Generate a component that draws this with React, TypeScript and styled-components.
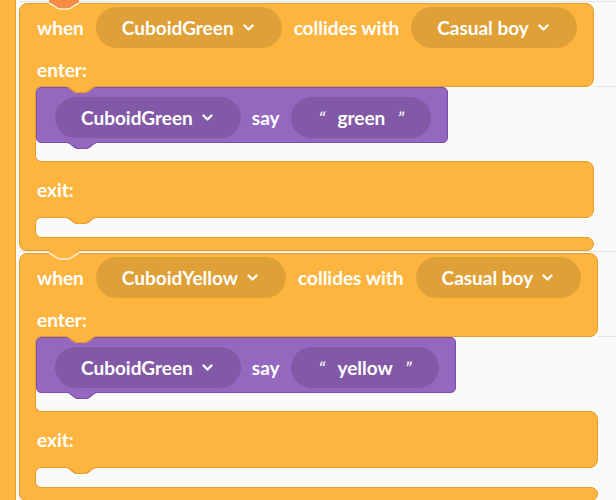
import React from 'react'
import styled, { createGlobalStyle } from 'styled-components'

const orange = '#fdb540'
const orangeEdge = '#e59d2e'
const orangePill = '#e0a038'
const purple = '#9568bf'
const purpleEdge = '#7c4fae'
const purplePill = '#8259a7'
const paper = '#fafafa'

const GlobalStyle = createGlobalStyle`
  html, body {
    margin: 0;
    padding: 0;
    background: ${paper};
    overflow: hidden;
  }
  body {
    font-family: "Lato", "Open Sans", sans-serif;
  }
`

const Workspace = styled.div`
  display: flex;
  gap: 3px;
  height: 500px;
  overflow: hidden;
`

const OuterArm = styled.div`
  width: 15px;
  flex-shrink: 0;
  background: ${orange};
  border-right: 1px solid ${orangeEdge};
`

const Stack = styled.div`
  flex: 1;
  display: flex;
  flex-direction: column;
  align-items: flex-start;
  gap: 2px;
  padding-top: 3px;
`

const Block = styled.div`
  position: relative;
  display: flex;
  flex-direction: column;

  &::before {
    content: '';
    position: absolute;
    left: 0;
    top: -2px;
    width: 100vw;
    height: 1px;
    background: #e6e6e6;
  }
`

const Head = styled.div`
  position: relative;
  background: ${orange};
  border: 1px solid ${orangeEdge};
  border-radius: 8px 8px 8px 0;
  padding: 3px 16px 0 17px;

  &::after {
    content: '';
    position: absolute;
    left: 100%;
    bottom: -1px;
    width: 100vw;
    height: 1px;
    background: #e6e6e6;
  }
`

const Row = styled.div`
  display: flex;
  align-items: center;
  gap: 12px;
`

const Label = styled.span`
  color: #fff;
  font-weight: 700;
  font-size: 19px;
  line-height: 24px;
  white-space: nowrap;
`

const SectionLabel = styled(Label)`
  display: block;
  box-sizing: border-box;
  height: 38px;
  padding-top: 10px;
`

const Pill = styled.div<{ $tone: string }>`
  display: inline-flex;
  align-items: center;
  gap: 9px;
  height: 41px;
  padding: 0 28px 0 26px;
  border-radius: 21px;
  background: ${p => p.$tone};
  color: #fff;
  font-weight: 700;
  font-size: 19px;
  white-space: nowrap;
`

const TextPill = styled(Pill)`
  gap: 12px;
  padding: 0 27px 0 28px;
`

const Quote = styled.span`
  font-weight: 400;
  font-style: italic;
  font-size: 20px;
`

const ChevronIcon = styled.svg`
  fill: none;
  stroke: #fff;
  stroke-width: 2.4;
  stroke-linecap: round;
  stroke-linejoin: round;
  flex-shrink: 0;
`

const Mouth = styled.div`
  position: relative;
  z-index: 1;
  display: flex;
  margin: -1px 0;
  padding-left: 15px;
  border-left: 1px solid ${orangeEdge};
  background: linear-gradient(90deg, ${orange} 22px, transparent 22px);
`

const Slot = styled.div<{ $empty?: boolean }>`
  position: relative;
  flex: 1;
  display: flex;
  flex-direction: column;
  align-items: flex-start;
  margin-right: 7px;
  min-height: 19px;
  padding-bottom: ${p => (p.$empty ? 0 : 18)}px;
  background: ${paper};
  border: 1px solid ${orangeEdge};
  border-right: none;
  border-radius: 6px 0 0 6px;
`

const Middle = styled.div`
  background: ${orange};
  border: 1px solid ${orangeEdge};
  border-radius: 0 8px 8px 0;
  padding: 16px 17px 15px;
`

const Foot = styled.div`
  height: 12px;
  background: ${orange};
  border: 1px solid ${orangeEdge};
  border-radius: 0 7px 7px 7px;
`

const Command = styled.div`
  position: relative;
  display: flex;
  align-items: center;
  gap: 11px;
  background: ${purple};
  border: 1px solid ${purpleEdge};
  border-radius: 5px;
  padding: 9px 16px 4px 18px;
`

const TabSvg = styled.svg`
  position: absolute;
  z-index: 2;
  overflow: visible;
`

const SlotTabSvg = styled(TabSvg)`
  left: 30px;
  top: -2px;
`

const CommandTabSvg = styled(TabSvg)`
  left: 30px;
  top: calc(100% - 1px);
`

const NotchSvg = styled(TabSvg)`
  left: 30px;
  top: -4px;
`

const tabFill = 'M0 0 H30 V1.5 C26 1.5 23 7.5 19 7.5 H11 C7 7.5 4 1.5 0 1.5 Z'
const tabLine = 'M0 1.5 C4 1.5 7 7.5 11 7.5 H19 C23 7.5 26 1.5 30 1.5'

const Tab = ({ fill, edge, Svg }: { fill: string; edge: string; Svg: typeof TabSvg }) => (
  <Svg width="30" height="9" viewBox="0 0 30 9">
    <path d={tabFill} fill={fill} />
    <path d={tabLine} fill="none" stroke={edge} strokeWidth="1.2" />
  </Svg>
)

const Notch = ({ fill }: { fill: string }) => (
  <NotchSvg width="30" height="11" viewBox="0 0 30 11">
    <path d="M0 0 H30 V4.5 C26 4.5 23 10 19 10 H11 C7 10 4 4.5 0 4.5 Z" fill={fill} />
    <path d="M0 4.5 C4 4.5 7 10 11 10 H19 C23 10 26 4.5 30 4.5" fill="none" stroke="#fff4e0" strokeWidth="1.4" />
  </NotchSvg>
)

const Chevron = () => (
  <ChevronIcon width="11" height="7" viewBox="0 0 11 7">
    <path d="M1.5 1.5 L5.5 5.5 L9.5 1.5" />
  </ChevronIcon>
)

const Dropdown = ({ tone, children }: { tone: string; children: React.ReactNode }) => (
  <Pill $tone={tone}>
    <span>{children}</span>
    <Chevron />
  </Pill>
)

type Rule = { subject: string; other: string; actor: string; line: string; above: string }

const rules: Rule[] = [
  { subject: 'CuboidGreen', other: 'Casual boy', actor: 'CuboidGreen', line: 'green', above: '#f98c44' },
  { subject: 'CuboidYellow', other: 'Casual boy', actor: 'CuboidGreen', line: 'yellow', above: orange },
]

const SayBlock = ({ actor, line }: { actor: string; line: string }) => (
  <Command>
    <Dropdown tone={purplePill}>{actor}</Dropdown>
    <Label>say</Label>
    <TextPill $tone={purplePill}>
      <Quote>“</Quote>
      <span>{line}</span>
      <Quote>”</Quote>
    </TextPill>
    <Tab fill={purple} edge={purpleEdge} Svg={CommandTabSvg} />
  </Command>
)

const CollisionBlock = ({ rule }: { rule: Rule }) => (
  <Block>
    <Head>
      <Row>
        <Label>when</Label>
        <Dropdown tone={orangePill}>{rule.subject}</Dropdown>
        <Label>collides with</Label>
        <Dropdown tone={orangePill}>{rule.other}</Dropdown>
      </Row>
      <SectionLabel>enter:</SectionLabel>
    </Head>
    <Notch fill={rule.above} />
    <Mouth>
      <Slot>
        <Tab fill={orange} edge={orangeEdge} Svg={SlotTabSvg} />
        <SayBlock actor={rule.actor} line={rule.line} />
      </Slot>
    </Mouth>
    <Middle>
      <Label>exit:</Label>
    </Middle>
    <Mouth>
      <Slot $empty>
        <Tab fill={orange} edge={orangeEdge} Svg={SlotTabSvg} />
      </Slot>
    </Mouth>
    <Foot />
  </Block>
)

export default function App() {
  return (
    <>
      <GlobalStyle />
      <Workspace>
        <OuterArm />
        <Stack>
          {rules.map(rule => (
            <CollisionBlock key={rule.subject} rule={rule} />
          ))}
        </Stack>
      </Workspace>
    </>
  )
}
